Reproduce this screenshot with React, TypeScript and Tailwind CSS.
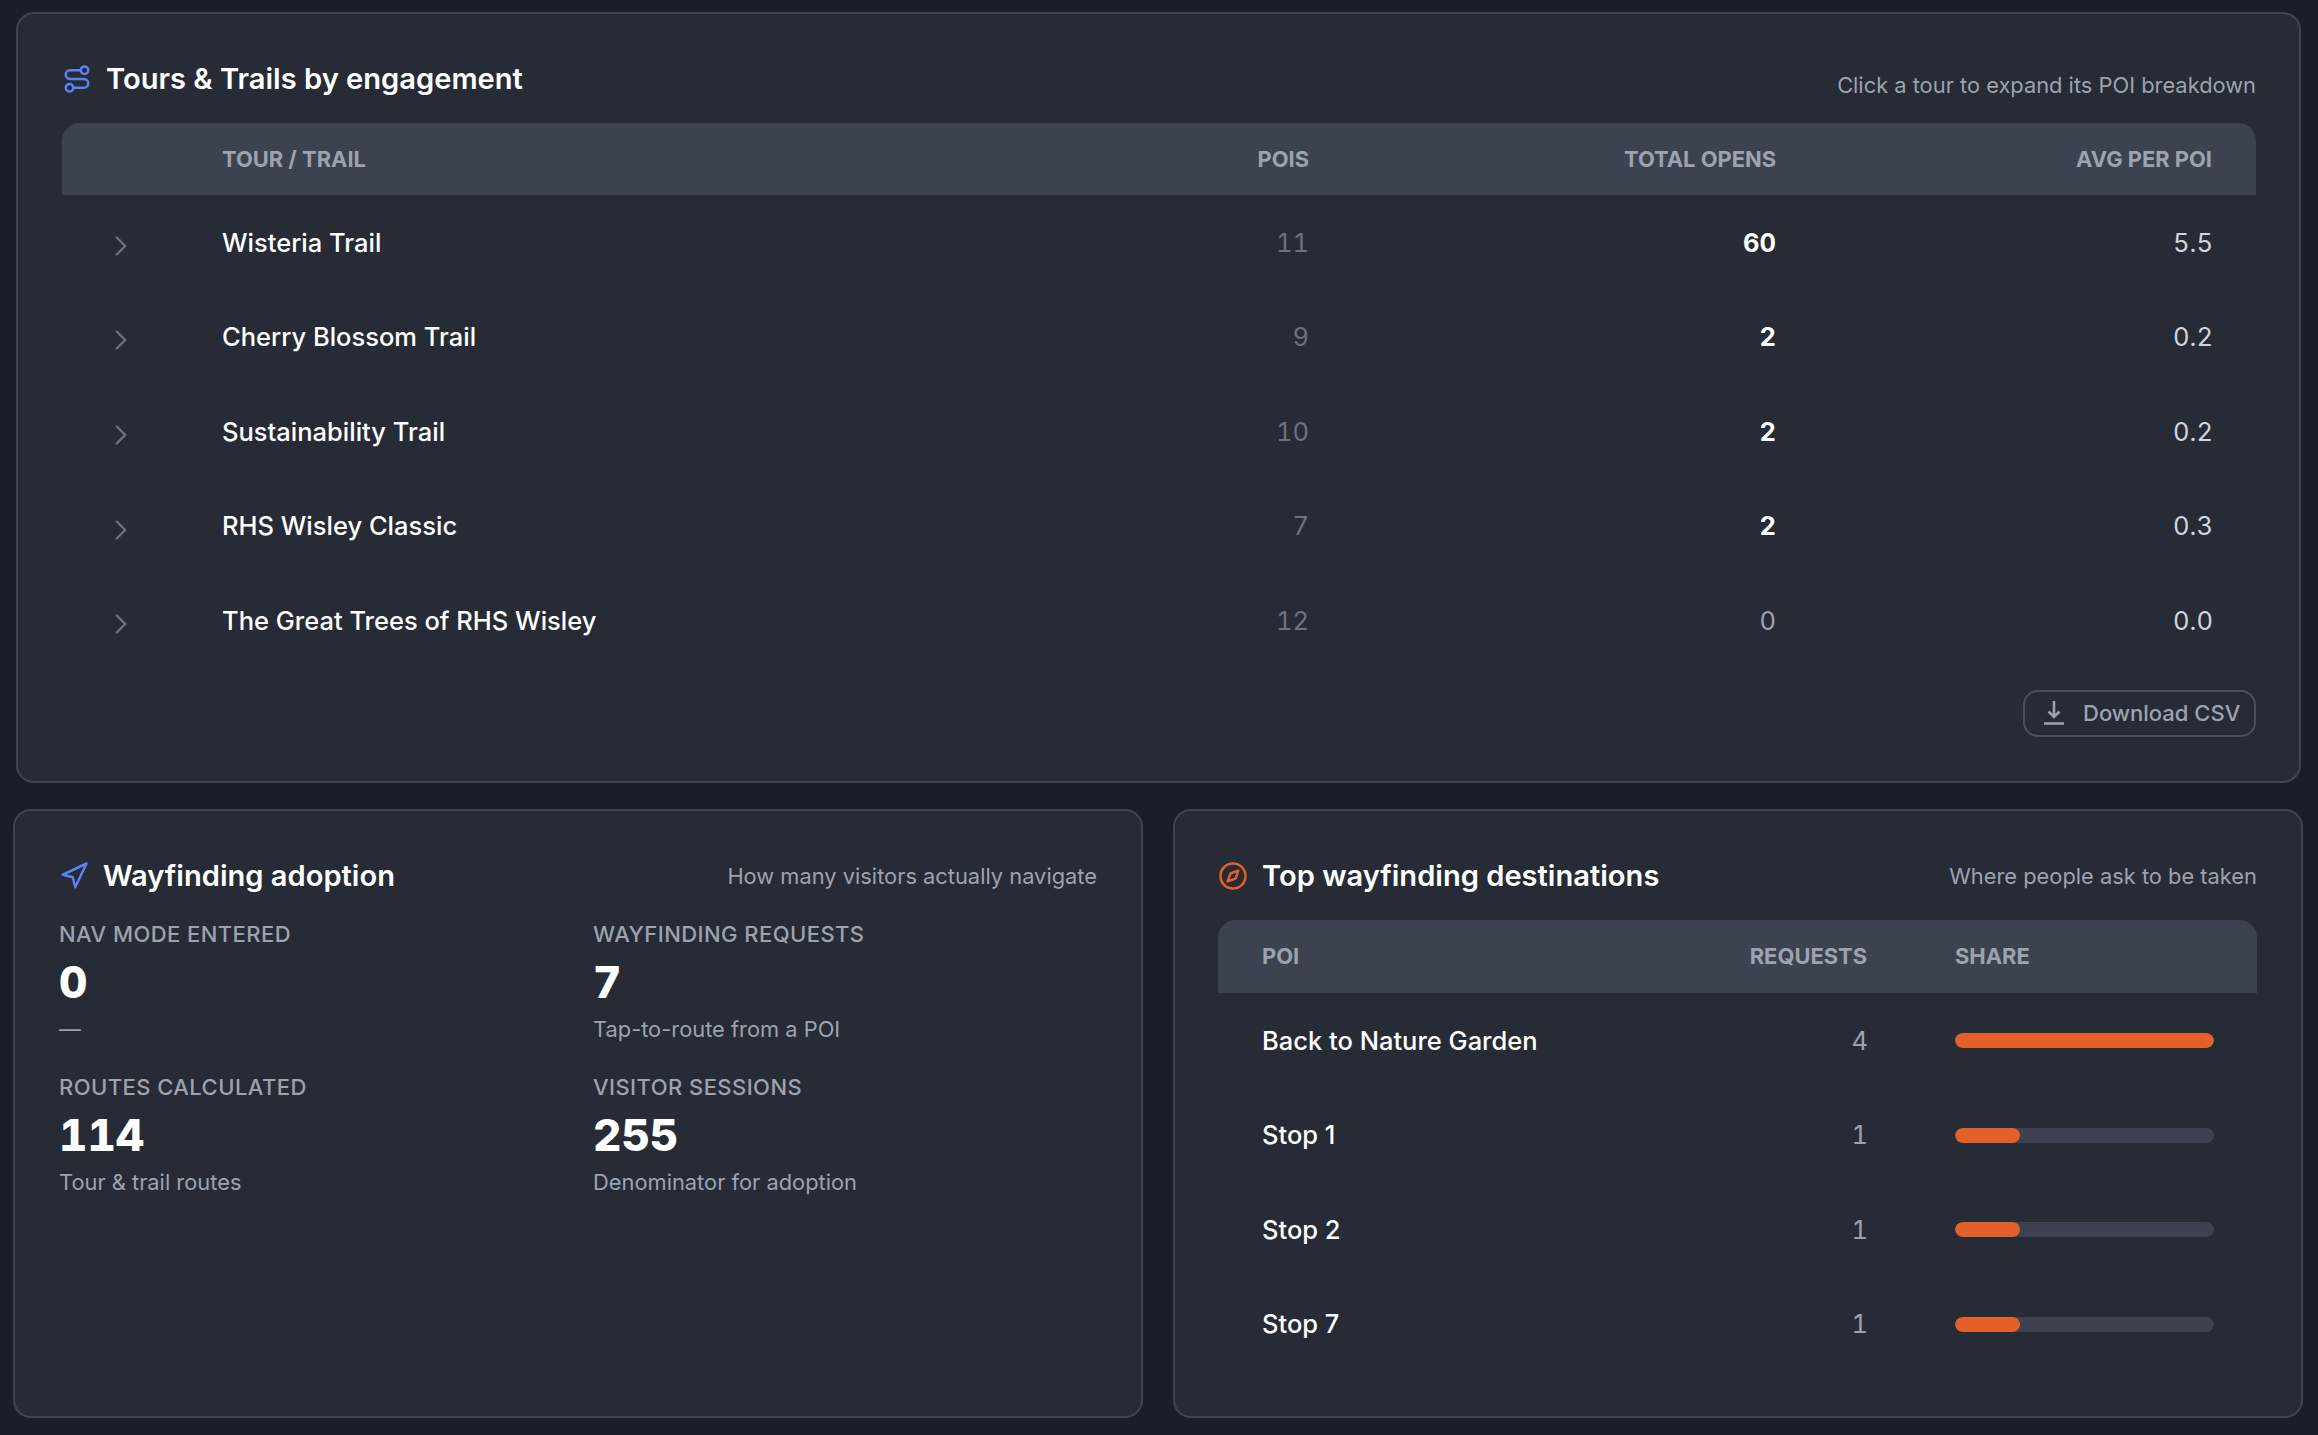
import { ChevronRight, Navigation, Compass, Route } from 'lucide-react';

const tours = [
  { name: 'Wisteria Trail', pois: 11, opens: 60, avg: '5.5' },
  { name: 'Cherry Blossom Trail', pois: 9, opens: 2, avg: '0.2' },
  { name: 'Sustainability Trail', pois: 10, opens: 2, avg: '0.2' },
  { name: 'RHS Wisley Classic', pois: 7, opens: 2, avg: '0.3' },
  { name: 'The Great Trees of RHS Wisley', pois: 12, opens: 0, avg: '0.0' },
];

const stats = [
  { label: 'NAV MODE ENTERED', value: '0', sub: '—' },
  { label: 'WAYFINDING REQUESTS', value: '7', sub: 'Tap-to-route from a POI' },
  { label: 'ROUTES CALCULATED', value: '114', sub: 'Tour & trail routes' },
  { label: 'VISITOR SESSIONS', value: '255', sub: 'Denominator for adoption' },
];

const destinations = [
  { name: 'Back to Nature Garden', requests: 4, share: 100 },
  { name: 'Stop 1', requests: 1, share: 25 },
  { name: 'Stop 2', requests: 1, share: 25 },
  { name: 'Stop 7', requests: 1, share: 25 },
];

export default function App() {
  return (
    <div className="min-h-screen bg-[#1a1e2b] pt-[12px] pb-[17px] pl-[13px] pr-[15px] font-['Inter',sans-serif]">
      <section className="ml-[3px] mr-[2px] h-[771px] rounded-[18px] border-2 border-[#3f4451] bg-[#262b36] pl-[44px] pr-[43px]">
        <div className="flex h-[109px] items-start justify-between">
          <div className="mt-[47px] flex items-center gap-[14px]">
            <Route className="h-[30px] w-[30px] text-[#5b82f0]" strokeWidth={2} />
            <h2 className="text-[29.1px] font-semibold leading-[36px] text-white">Tours &amp; Trails by engagement</h2>
          </div>
          <span className="mt-[55px] text-[21.85px] leading-[32px] text-[#9ca3af]">Click a tour to expand its POI breakdown</span>
        </div>
        <div className="grid h-[72px] grid-cols-[117px_921px_252px_468px_436px] items-center rounded-t-[18px] bg-[#3c4250] text-[21.9px] font-bold text-[#9ca3af]">
          <div />
          <div className="pl-[43px]">TOUR / TRAIL</div>
          <div className="pr-[43px] text-right">POIS</div>
          <div className="pr-[44px] text-right">TOTAL OPENS</div>
          <div className="pr-[44px] text-right">AVG PER POI</div>
        </div>
        {tours.map((t) => (
          <div key={t.name} className="grid h-[94.6px] grid-cols-[117px_921px_252px_468px_436px] items-center pt-[1px] text-[25.5px]">
            <div className="flex justify-center">
              <ChevronRight className="mt-[6px] h-[34px] w-[34px] text-[#6b7280]" strokeWidth={1.7} />
            </div>
            <div className="pl-[43px] font-medium text-white">{t.name}</div>
            <div className="pr-[43px] text-right text-[#6b7280] tabular-nums">{t.pois}</div>
            <div className={t.opens > 0 ? 'pr-[44px] text-right font-bold text-white tabular-nums' : 'pr-[44px] text-right text-[#9ca3af] tabular-nums'}>{t.opens}</div>
            <div className="pr-[43px] text-right text-[#d1d5db] tabular-nums">{t.avg}</div>
          </div>
        ))}
        <div className="mt-[22px] flex justify-end">
          <button
            type="button"
            className="flex h-[47px] w-[233px] items-center gap-[19px] rounded-[15px] border-2 border-[#4b5060] pl-[19px] text-[22px] font-medium text-[#9ca3af]"
          >
            <svg viewBox="0 0 20 24" className="h-[24px] w-[20px]" fill="none" stroke="currentColor" strokeWidth={2.6}>
              <path d="M10 0v16M4.5 10.5l5.5 5.5 5.5-5.5M0 22.5h20" />
            </svg>
            Download CSV
          </button>
        </div>
      </section>

      <div className="mt-[26px] grid grid-cols-2 gap-[30px]">
        <section className="h-[609px] rounded-[18px] border-2 border-[#3f4451] bg-[#262b36] pl-[44px] pr-[44px]">
          <div className="flex h-[107px] items-center justify-between pt-[23px]">
            <div className="flex items-center gap-[14px]">
              <Navigation className="h-[30px] w-[30px] text-[#5b82f0]" strokeWidth={2} />
              <h2 className="text-[29.1px] font-semibold leading-[36px] text-white">Wayfinding adoption</h2>
            </div>
            <span className="text-[21.85px] text-[#9ca3af]">How many visitors actually navigate</span>
          </div>
          <div className="grid grid-cols-2 gap-x-[30px]">
            {stats.map((s) => (
              <div key={s.label} className="h-[153px]">
                <div className="text-[22px] font-medium leading-[32px] tracking-[0.02em] text-[#9ca3af]">{s.label}</div>
                <div className="mt-[6px] text-[44px] font-extrabold leading-[52px] text-white tabular-nums">{s.value}</div>
                <div className="mt-[5px] text-[21.85px] leading-[32px] text-[#9ca3af]">{s.sub}</div>
              </div>
            ))}
          </div>
        </section>

        <section className="h-[609px] rounded-[18px] border-2 border-[#3f4451] bg-[#262b36] pl-[43px] pr-[44px]">
          <div className="flex h-[109px] items-center justify-between pt-[21px]">
            <div className="flex items-center gap-[14px]">
              <Compass className="h-[30px] w-[30px] text-[#e4602a]" strokeWidth={2} />
              <h2 className="text-[29.1px] font-semibold leading-[36px] text-white">Top wayfinding destinations</h2>
            </div>
            <span className="text-[21.85px] text-[#9ca3af]">Where people ask to be taken</span>
          </div>
          <div className="grid h-[73px] grid-cols-[1fr_200px_390px] items-center rounded-t-[18px] bg-[#3c4250] text-[21.9px] font-bold text-[#9ca3af]">
            <div className="pl-[44px]">POI</div>
            <div className="text-right">REQUESTS</div>
            <div className="pl-[88px]">SHARE</div>
          </div>
          {destinations.map((d) => (
            <div key={d.name} className="grid h-[94.6px] grid-cols-[1fr_200px_390px] items-center pt-[1px] text-[25.5px]">
              <div className="pl-[44px] font-medium text-white">{d.name}</div>
              <div className="mr-[-1px] text-right text-[#9ca3af] tabular-nums">{d.requests}</div>
              <div className="pl-[88px] pr-[43px]">
                <div className="h-[15px] overflow-hidden rounded-full bg-[#3c4250]">
                  <div className="h-full rounded-full bg-[#e4602a]" style={{ width: `${d.share}%` }} />
                </div>
              </div>
            </div>
          ))}
        </section>
      </div>
    </div>
  );
}
